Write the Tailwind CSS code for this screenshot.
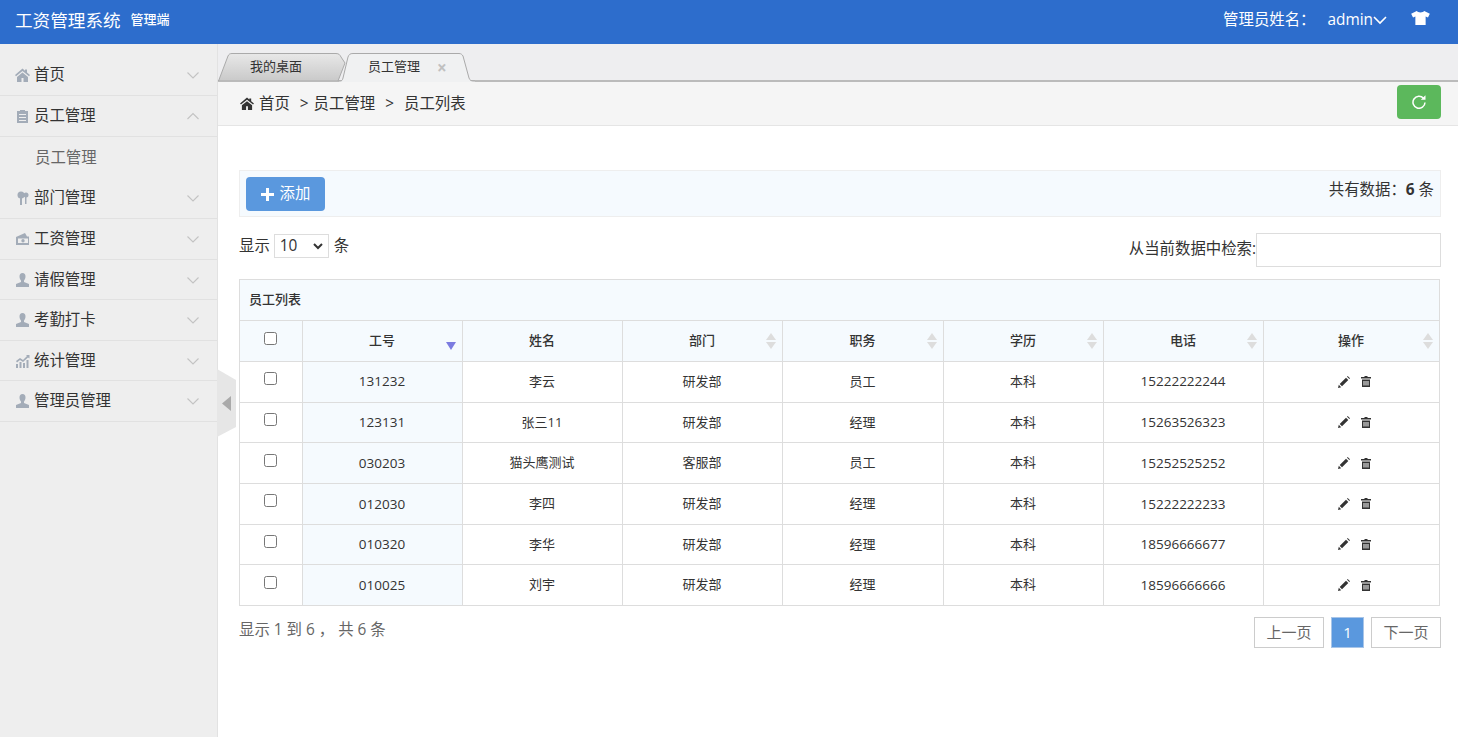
<!DOCTYPE html>
<html lang="zh-CN">
<head>
<meta charset="utf-8">
<title>工资管理系统</title>
<script src="https://cdn.jsdelivr.net/npm/@tailwindcss/browser@4"></script>
</head>
<body class="w-[1458px] h-[737px] overflow-hidden bg-white text-[#333] text-[15.4px] font-['Open_Sans','Noto_Sans_CJK_SC',sans-serif]">
<header class="h-11 bg-[#2d6dcc] flex items-center text-white pb-[4px]">
  <div class="ml-[15px] text-[17.6px] leading-[40px]">工资管理系统</div>
  <div class="ml-[10px] text-[13px] font-medium">管理端</div>
  <div class="ml-auto flex items-center text-[15.4px]">
    <span>管理员姓名：</span>
    <span class="ml-[12px]">admin</span>
    <svg class="w-[14px] h-[14px]" viewBox="0 0 14 14" fill="none" stroke="#fff" stroke-width="1.6"><path d="M1 4 7 10l6-6"/></svg>
    <svg class="ml-[24px] mr-[28px] w-[19px] h-[14px] -mt-[3px]" viewBox="0 0 20 15" fill="#fff"><path d="M6 0 0 3l2 4 2.500-1v9h11V6L18 7l2-4-6-3c-1 2-7 2-8 0z"/></svg>
  </div>
</header>
<div class="flex h-[693px]">
  <aside class="relative w-[218px] shrink-0 bg-[#eee] border-r border-[#e2e2e2] pt-[11px]">
    <nav class="text-[#333]">
      <div class="h-[41px] flex items-center border-b border-[#e1e1e1] pl-[15px] pr-[17px]">
        <svg class="w-[15px] h-[14px] mr-[4px]" viewBox="0 0 15 14" fill="#a3acb8"><path d="M7.500 .5 0 7l1 1.200L7.500 3 14 8.200 15 7l-3-2.500v-3h-2v1.300zM2 9v5h4.500v-4h2v4H13V9L7.500 4.500z"/></svg>
        <span>首页</span>
        <svg class="ml-auto w-[14px] h-[14px]" viewBox="0 0 14 14" fill="none" stroke="#c3c3c3" stroke-width="1.100"><path d="M1.500 4.500 7 10l5.500-5.500"/></svg>
      </div>
      <div class="h-[41px] flex items-center border-b border-[#e1e1e1] pl-[15px] pr-[17px]">
        <svg class="w-[15px] h-[14px] mr-[4px]" viewBox="0 0 15 14" fill="#a3acb8"><path d="M2 2h3V1h5v1h3v12H2zM4 5v1h7V5zm0 3v1h7V8zm0 3v1h7v-1z" fill-rule="evenodd"/></svg>
        <span>员工管理</span>
        <svg class="ml-auto w-[14px] h-[14px]" viewBox="0 0 14 14" fill="none" stroke="#c3c3c3" stroke-width="1.100"><path d="M1.500 10 7 4.500l5.500 5.500"/></svg>
      </div>
      <div class="h-[41px] flex items-center pl-[35px] text-[#666]">员工管理</div>
      <div class="h-[41px] flex items-center border-b border-[#e1e1e1] pl-[15px] pr-[17px]">
        <svg class="w-[15px] h-[14px] mr-[4px]" viewBox="0 0 15 14" fill="#a3acb8"><circle cx="6" cy="4" r="3.500"/><circle cx="11" cy="4" r="2.500"/><path d="M5 7h2v7H5zM10 6h1.500v7H10z"/></svg>
        <span>部门管理</span>
        <svg class="ml-auto w-[14px] h-[14px]" viewBox="0 0 14 14" fill="none" stroke="#c3c3c3" stroke-width="1.100"><path d="M1.500 4.500 7 10l5.500-5.500"/></svg>
      </div>
      <div class="h-[41px] flex items-center border-b border-[#e1e1e1] pl-[15px] pr-[17px]">
        <svg class="w-[15px] h-[14px] mr-[4px]" viewBox="0 0 15 14" fill="#a3acb8"><path d="M1 5 10 1l2 3.500h2V13H1zm2 1.500V11h10V6.500zM8 7a1.700 1.700 0 1 1 0 3.400A1.700 1.700 0 0 1 8 7z" fill-rule="evenodd"/></svg>
        <span>工资管理</span>
        <svg class="ml-auto w-[14px] h-[14px]" viewBox="0 0 14 14" fill="none" stroke="#c3c3c3" stroke-width="1.100"><path d="M1.500 4.500 7 10l5.500-5.500"/></svg>
      </div>
      <div class="h-[40px] flex items-center border-b border-[#e1e1e1] pl-[15px] pr-[17px]">
        <svg class="w-[15px] h-[14px] mr-[4px]" viewBox="0 0 15 14" fill="#a3acb8"><path d="M7.500 0C5.500 0 4.500 1.500 4.500 3.500S5.500 7 6 7.500V9l-5 2v3h13v-3L9 9V7.500c.5-.5 1.500-2 1.500-4S9.500 0 7.500 0z"/></svg>
        <span>请假管理</span>
        <svg class="ml-auto w-[14px] h-[14px]" viewBox="0 0 14 14" fill="none" stroke="#c3c3c3" stroke-width="1.100"><path d="M1.500 4.500 7 10l5.500-5.500"/></svg>
      </div>
      <div class="h-[41px] flex items-center border-b border-[#e1e1e1] pl-[15px] pr-[17px]">
        <svg class="w-[15px] h-[14px] mr-[4px]" viewBox="0 0 15 14" fill="#a3acb8"><path d="M7.500 0C5.500 0 4.500 1.500 4.500 3.500S5.500 7 6 7.500V9l-5 2v3h13v-3L9 9V7.500c.5-.5 1.500-2 1.500-4S9.500 0 7.500 0z"/></svg>
        <span>考勤打卡</span>
        <svg class="ml-auto w-[14px] h-[14px]" viewBox="0 0 14 14" fill="none" stroke="#c3c3c3" stroke-width="1.100"><path d="M1.500 4.500 7 10l5.500-5.500"/></svg>
      </div>
      <div class="h-[40px] flex items-center border-b border-[#e1e1e1] pl-[15px] pr-[17px]">
        <svg class="w-[15px] h-[14px] mr-[4px]" viewBox="0 0 15 14" fill="#a3acb8"><path d="M1 10h2v4H1zM4.500 8h2v6h-2zM8 9h2v5H8zM11.500 6h2v8h-2zM1 7l4-3 3 2 4-4-1-1h3.500v3.500L13 3.500 8 8 5 6 2 8.500z"/></svg>
        <span>统计管理</span>
        <svg class="ml-auto w-[14px] h-[14px]" viewBox="0 0 14 14" fill="none" stroke="#c3c3c3" stroke-width="1.100"><path d="M1.500 4.500 7 10l5.500-5.500"/></svg>
      </div>
      <div class="h-[41px] flex items-center border-b border-[#e1e1e1] pl-[15px] pr-[17px]">
        <svg class="w-[15px] h-[14px] mr-[4px]" viewBox="0 0 15 14" fill="#a3acb8"><path d="M7.500 0C5.500 0 4.500 1.500 4.500 3.500S5.500 7 6 7.500V9l-5 2v3h13v-3L9 9V7.500c.5-.5 1.500-2 1.500-4S9.500 0 7.500 0z"/></svg>
        <span>管理员管理</span>
        <svg class="ml-auto w-[14px] h-[14px]" viewBox="0 0 14 14" fill="none" stroke="#c3c3c3" stroke-width="1.100"><path d="M1.500 4.500 7 10l5.500-5.500"/></svg>
      </div>
    </nav>
    <svg class="absolute left-[217px] top-[325px] w-[20px] h-[68px]" viewBox="0 0 20 68"><path d="M0 0 19 11v47L0 68z" fill="#e6e6e6"/><path d="M14 27v15l-9-7.500z" fill="#aaa"/></svg>
  </aside>
  <main class="flex-1 min-w-0">
    <div class="relative h-[38px] bg-[#eeeef0] border-b-2 border-[#bbb]">
      <div class="absolute left-0 top-[9px] w-[128px] h-[28px]">
        <svg class="absolute inset-0" width="128" height="28" viewBox="0 0 128 28"><defs><linearGradient id="tabg" x1="0" y1="0" x2="0" y2="1"><stop offset="0" stop-color="#e8e8e8"/><stop offset="1" stop-color="#c9c9c9"/></linearGradient></defs><path d="M.5 28 10 3C11 1 12 .5 14 .5h104c3 0 4 1.500 5 3.500l4 6-7 18z" fill="url(#tabg)" stroke="#aaa"/></svg>
        <span class="relative block pl-[32px] leading-[27px] text-[13px] text-[#333]">我的桌面</span>
      </div>
      <div class="absolute left-[121px] top-[9px] w-[136px] h-[29px]">
        <svg class="absolute inset-0" width="136" height="29" viewBox="0 0 136 29"><path d="M0 29V28h1c2 0 2.500-1 3-3L9 4c1-2.500 2-3.500 5-3.500h106c2 0 3 1 4 2.500l6 22c1 2.500 2 3 5 3h1v1z" fill="#f0f1f2"/><path d="M0 28h1c2 0 2.500-1 3-3L9 4c1-2.500 2-3.500 5-3.500h106c2 0 3 1 4 2.500l6 22c1 2.500 2 3 5 3h1" fill="none" stroke="#aaa"/></svg>
        <span class="relative block pl-[29px] leading-[27px] text-[13px] text-[#333]">员工管理</span>
        <span class="absolute left-[98px] top-0 leading-[29px] text-[17px] font-bold text-[#c0c0c0]">×</span>
      </div>
    </div>
    <div class="h-[44px] bg-[#f5f5f5] border-b border-[#e5e5e5] flex items-center pl-[22px] pr-[17px]">
      <svg class="w-[14px] h-[13px] mr-[5px]" viewBox="0 0 15 14" fill="#333"><path d="M7.500 .5 0 7l1 1.200L7.500 3 14 8.200 15 7l-3-2.500v-3h-2v1.300zM2 9v5h4.500v-4h2v4H13V9L7.500 4.500z"/></svg>
      <span>首页</span>
      <span class="ml-[10px]">&gt;</span>
      <span class="ml-[5px]">员工管理</span>
      <span class="ml-[10px]">&gt;</span>
      <span class="ml-[10px]">员工列表</span>
      <div class="ml-auto self-start mt-[3px] w-[44px] h-[34px] rounded bg-[#5cb85c] flex items-center justify-center">
        <svg class="w-[14px] h-[14px]" viewBox="0 0 14 14" fill="none" stroke="#fff" stroke-width="1.500"><path d="M11.500 3.300A6 6 0 1 0 13 7.500"/><path d="M8.800 4.800h4.700V.2z" stroke="none" fill="#fff"/></svg>
      </div>
    </div>
    <div class="pl-[21px] pr-[17px] pt-[44px]">
      <div class="h-[47px] bg-[#f5fafe] border border-[#eee] flex justify-between pl-[6px] pr-[6px] pt-[6px]">
        <div class="w-[79px] h-[34px] rounded bg-[#5a98de] text-white flex items-center justify-center">
          <svg class="w-[13px] h-[13px] mr-[6px]" viewBox="0 0 13 13" fill="#fff"><path d="M5 0h3v5h5v3H8v5H5V8H0V5h5z"/></svg>
          <span>添加</span>
        </div>
        <div class="leading-[25px]">共有数据：<b class="font-bold">6</b> 条</div>
      </div>
      <div class="flex justify-between mt-[16px] h-[34px]">
        <div class="flex items-center h-[24px] mt-[1px]">
          <span>显示</span>
          <div class="ml-[4px] mr-[5px] w-[55px] h-[24px] border border-[#ddd] flex items-center pl-[5px]">
            <span>10</span>
            <svg class="ml-auto mr-[5px] w-[10px] h-[10px]" viewBox="0 0 10 10" fill="none" stroke="#333" stroke-width="2"><path d="M1 3l4 4 4-4"/></svg>
          </div>
          <span>条</span>
        </div>
        <div class="flex items-center">
          <span class="-mt-[2px]">从当前数据中检索:</span>
          <div class="w-[185px] h-[34px] border border-[#ddd]"></div>
        </div>
      </div>
      <div class="w-[1201px] mt-[12px] border border-[#ddd] border-b-0 border-r-0">
        <div class="h-[41px] bg-[#f5fafe] border-b border-r border-[#ddd] flex items-center pl-[9px] text-[13px] font-medium">员工列表</div>
        <table class="table-fixed w-[1199px] border-collapse text-[13px] text-[#333]">
          <colgroup><col class="w-[62px]"><col class="w-[160px]"><col class="w-[160px]"><col class="w-[160px]"><col class="w-[161px]"><col class="w-[160px]"><col class="w-[160px]"><col class="w-[176px]"></colgroup>
          <thead class="bg-[#f5fafe] font-medium">
            <tr class="h-[40px]">
              <th class="border-r border-b border-[#ddd] font-normal"><div class="mx-auto -mt-[4px] w-[13px] h-[13px] rounded-[2.500px] border border-[#777] bg-white"></div></th>
              <th class="relative border-r border-b border-[#ddd] font-medium">工号<span class="absolute right-[6px] top-[21px] w-0 h-0 border-x-[5px] border-x-transparent border-t-[8px] border-t-[#7b7be0]"></span></th>
              <th class="relative border-r border-b border-[#ddd] font-medium">姓名</th>
              <th class="relative border-r border-b border-[#ddd] font-medium">部门<span class="absolute right-[6px] top-[12px] w-0 h-0 border-x-[5px] border-x-transparent border-b-[7px] border-b-[#ddd]"></span><span class="absolute right-[6px] top-[21px] w-0 h-0 border-x-[5px] border-x-transparent border-t-[7px] border-t-[#ddd]"></span></th>
              <th class="relative border-r border-b border-[#ddd] font-medium">职务<span class="absolute right-[6px] top-[12px] w-0 h-0 border-x-[5px] border-x-transparent border-b-[7px] border-b-[#ddd]"></span><span class="absolute right-[6px] top-[21px] w-0 h-0 border-x-[5px] border-x-transparent border-t-[7px] border-t-[#ddd]"></span></th>
              <th class="relative border-r border-b border-[#ddd] font-medium">学历<span class="absolute right-[6px] top-[12px] w-0 h-0 border-x-[5px] border-x-transparent border-b-[7px] border-b-[#ddd]"></span><span class="absolute right-[6px] top-[21px] w-0 h-0 border-x-[5px] border-x-transparent border-t-[7px] border-t-[#ddd]"></span></th>
              <th class="relative border-r border-b border-[#ddd] font-medium">电话<span class="absolute right-[6px] top-[12px] w-0 h-0 border-x-[5px] border-x-transparent border-b-[7px] border-b-[#ddd]"></span><span class="absolute right-[6px] top-[21px] w-0 h-0 border-x-[5px] border-x-transparent border-t-[7px] border-t-[#ddd]"></span></th>
              <th class="relative border-r border-b border-[#ddd] font-medium">操作<span class="absolute right-[6px] top-[12px] w-0 h-0 border-x-[5px] border-x-transparent border-b-[7px] border-b-[#ddd]"></span><span class="absolute right-[6px] top-[21px] w-0 h-0 border-x-[5px] border-x-transparent border-t-[7px] border-t-[#ddd]"></span></th>
            </tr>
          </thead>
          <tbody class="text-center">
            <tr class="h-[41px]">
              <td class="border-r border-b border-[#ddd]"><div class="mx-auto -mt-[6px] w-[13px] h-[13px] rounded-[2.500px] border border-[#777] bg-white"></div></td>
              <td class="border-r border-b border-[#ddd] bg-[#f5fafe] text-[13.5px]">131232</td><td class="border-r border-b border-[#ddd]">李云</td><td class="border-r border-b border-[#ddd]">研发部</td><td class="border-r border-b border-[#ddd]">员工</td><td class="border-r border-b border-[#ddd]">本科</td><td class="border-r border-b border-[#ddd] text-[13.5px]">15222222244</td>
              <td class="border-r border-b border-[#ddd]"><div class="flex items-center justify-center gap-[11px] ml-[6px]"><svg class="w-[12px] h-[12px]" viewBox="0 0 12 12" fill="#333"><path d="M0 12l.8-3.200 2.400 2.400zM1.700 8 8 1.700 10.300 4 4 10.300zM9 .7 9.700 0 12 2.300l-.7.7z"/></svg><svg class="w-[10px] h-[11px]" viewBox="0 0 10 11" fill="#333"><path d="M3.500 0h3v1H10v1.500H0V1h3.500zM1 3.500h8V11H1zM2.500 5v4.500h1V5zm2 0v4.500h1V5zm2 0v4.500h1V5z" fill-rule="evenodd"/></svg></div></td>
            </tr>
            <tr class="h-[40.670px]">
              <td class="border-r border-b border-[#ddd]"><div class="mx-auto -mt-[6px] w-[13px] h-[13px] rounded-[2.500px] border border-[#777] bg-white"></div></td>
              <td class="border-r border-b border-[#ddd] bg-[#f5fafe] text-[13.5px]">123131</td><td class="border-r border-b border-[#ddd]">张三11</td><td class="border-r border-b border-[#ddd]">研发部</td><td class="border-r border-b border-[#ddd]">经理</td><td class="border-r border-b border-[#ddd]">本科</td><td class="border-r border-b border-[#ddd] text-[13.5px]">15263526323</td>
              <td class="border-r border-b border-[#ddd]"><div class="flex items-center justify-center gap-[11px] ml-[6px]"><svg class="w-[12px] h-[12px]" viewBox="0 0 12 12" fill="#333"><path d="M0 12l.8-3.200 2.400 2.400zM1.700 8 8 1.700 10.300 4 4 10.300zM9 .7 9.700 0 12 2.300l-.7.7z"/></svg><svg class="w-[10px] h-[11px]" viewBox="0 0 10 11" fill="#333"><path d="M3.500 0h3v1H10v1.500H0V1h3.500zM1 3.500h8V11H1zM2.500 5v4.500h1V5zm2 0v4.500h1V5zm2 0v4.500h1V5z" fill-rule="evenodd"/></svg></div></td>
            </tr>
            <tr class="h-[41px]">
              <td class="border-r border-b border-[#ddd]"><div class="mx-auto -mt-[6px] w-[13px] h-[13px] rounded-[2.500px] border border-[#777] bg-white"></div></td>
              <td class="border-r border-b border-[#ddd] bg-[#f5fafe] text-[13.5px]">030203</td><td class="border-r border-b border-[#ddd]">猫头鹰测试</td><td class="border-r border-b border-[#ddd]">客服部</td><td class="border-r border-b border-[#ddd]">员工</td><td class="border-r border-b border-[#ddd]">本科</td><td class="border-r border-b border-[#ddd] text-[13.5px]">15252525252</td>
              <td class="border-r border-b border-[#ddd]"><div class="flex items-center justify-center gap-[11px] ml-[6px]"><svg class="w-[12px] h-[12px]" viewBox="0 0 12 12" fill="#333"><path d="M0 12l.8-3.200 2.400 2.400zM1.700 8 8 1.700 10.300 4 4 10.300zM9 .7 9.700 0 12 2.300l-.7.7z"/></svg><svg class="w-[10px] h-[11px]" viewBox="0 0 10 11" fill="#333"><path d="M3.500 0h3v1H10v1.500H0V1h3.500zM1 3.500h8V11H1zM2.500 5v4.500h1V5zm2 0v4.500h1V5zm2 0v4.500h1V5z" fill-rule="evenodd"/></svg></div></td>
            </tr>
            <tr class="h-[40.500px]">
              <td class="border-r border-b border-[#ddd]"><div class="mx-auto -mt-[6px] w-[13px] h-[13px] rounded-[2.500px] border border-[#777] bg-white"></div></td>
              <td class="border-r border-b border-[#ddd] bg-[#f5fafe] text-[13.5px]">012030</td><td class="border-r border-b border-[#ddd]">李四</td><td class="border-r border-b border-[#ddd]">研发部</td><td class="border-r border-b border-[#ddd]">经理</td><td class="border-r border-b border-[#ddd]">本科</td><td class="border-r border-b border-[#ddd] text-[13.5px]">15222222233</td>
              <td class="border-r border-b border-[#ddd]"><div class="flex items-center justify-center gap-[11px] ml-[6px]"><svg class="w-[12px] h-[12px]" viewBox="0 0 12 12" fill="#333"><path d="M0 12l.8-3.200 2.400 2.400zM1.700 8 8 1.700 10.300 4 4 10.300zM9 .7 9.700 0 12 2.300l-.7.7z"/></svg><svg class="w-[10px] h-[11px]" viewBox="0 0 10 11" fill="#333"><path d="M3.500 0h3v1H10v1.500H0V1h3.500zM1 3.500h8V11H1zM2.500 5v4.500h1V5zm2 0v4.500h1V5zm2 0v4.500h1V5z" fill-rule="evenodd"/></svg></div></td>
            </tr>
            <tr class="h-[40.500px]">
              <td class="border-r border-b border-[#ddd]"><div class="mx-auto -mt-[6px] w-[13px] h-[13px] rounded-[2.500px] border border-[#777] bg-white"></div></td>
              <td class="border-r border-b border-[#ddd] bg-[#f5fafe] text-[13.5px]">010320</td><td class="border-r border-b border-[#ddd]">李华</td><td class="border-r border-b border-[#ddd]">研发部</td><td class="border-r border-b border-[#ddd]">经理</td><td class="border-r border-b border-[#ddd]">本科</td><td class="border-r border-b border-[#ddd] text-[13.5px]">18596666677</td>
              <td class="border-r border-b border-[#ddd]"><div class="flex items-center justify-center gap-[11px] ml-[6px]"><svg class="w-[12px] h-[12px]" viewBox="0 0 12 12" fill="#333"><path d="M0 12l.8-3.200 2.400 2.400zM1.700 8 8 1.700 10.300 4 4 10.300zM9 .7 9.700 0 12 2.300l-.7.7z"/></svg><svg class="w-[10px] h-[11px]" viewBox="0 0 10 11" fill="#333"><path d="M3.500 0h3v1H10v1.500H0V1h3.500zM1 3.500h8V11H1zM2.500 5v4.500h1V5zm2 0v4.500h1V5zm2 0v4.500h1V5z" fill-rule="evenodd"/></svg></div></td>
            </tr>
            <tr class="h-[41px]">
              <td class="border-r border-b border-[#ddd]"><div class="mx-auto -mt-[6px] w-[13px] h-[13px] rounded-[2.500px] border border-[#777] bg-white"></div></td>
              <td class="border-r border-b border-[#ddd] bg-[#f5fafe] text-[13.5px]">010025</td><td class="border-r border-b border-[#ddd]">刘宇</td><td class="border-r border-b border-[#ddd]">研发部</td><td class="border-r border-b border-[#ddd]">经理</td><td class="border-r border-b border-[#ddd]">本科</td><td class="border-r border-b border-[#ddd] text-[13.5px]">18596666666</td>
              <td class="border-r border-b border-[#ddd]"><div class="flex items-center justify-center gap-[11px] ml-[6px]"><svg class="w-[12px] h-[12px]" viewBox="0 0 12 12" fill="#333"><path d="M0 12l.8-3.200 2.400 2.400zM1.700 8 8 1.700 10.300 4 4 10.300zM9 .7 9.700 0 12 2.300l-.7.7z"/></svg><svg class="w-[10px] h-[11px]" viewBox="0 0 10 11" fill="#333"><path d="M3.500 0h3v1H10v1.500H0V1h3.500zM1 3.500h8V11H1zM2.500 5v4.500h1V5zm2 0v4.500h1V5zm2 0v4.500h1V5z" fill-rule="evenodd"/></svg></div></td>
            </tr>
          </tbody>
        </table>
      </div>
      <div class="flex justify-between mt-[10px]">
        <div class="text-[#666] leading-[24px] mt-[2px]">显示 1 到 6 ， 共 6 条</div>
        <div class="flex gap-[7px] mt-[1px] text-[#666] text-[15px]">
          <div class="w-[70px] h-[31px] border border-[#ccc] flex items-center justify-center">上一页</div>
          <div class="w-[33px] h-[31px] border border-[#a8c5e8] bg-[#5a98de] text-white flex items-center justify-center">1</div>
          <div class="w-[70px] h-[31px] border border-[#ccc] flex items-center justify-center">下一页</div>
        </div>
      </div>
    </div>
  </main>
</div>
</body>
</html>
